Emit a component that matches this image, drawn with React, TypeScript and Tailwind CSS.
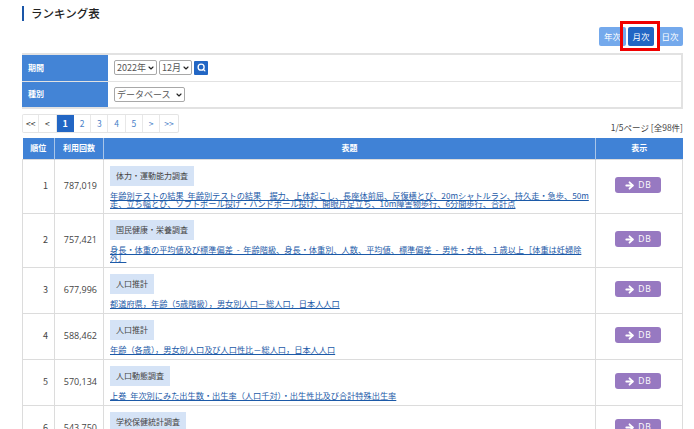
import { ArrowRight, ChevronDown, Search } from "lucide-react";

const rows = [
  { rank: 1, count: "787,019", tag: "体力・運動能力調査", title: "年齢別テストの結果 年齢別テストの結果　握力、上体起こし、長座体前屈、反復横とび、20mシャトルラン、持久走・急歩、50m走、立ち幅とび、ソフトボール投げ・ハンドボール投げ、開眼片足立ち、10m障害物歩行、6分間歩行、合計点" },
  { rank: 2, count: "757,421", tag: "国民健康・栄養調査", title: "身長・体重の平均値及び標準偏差 - 年齢階級、身長・体重別、人数、平均値、標準偏差 - 男性・女性、１歳以上［体重は妊婦除外］" },
  { rank: 3, count: "677,996", tag: "人口推計", title: "都道府県，年齢（5歳階級），男女別人口－総人口，日本人人口" },
  { rank: 4, count: "588,462", tag: "人口推計", title: "年齢（各歳），男女別人口及び人口性比－総人口，日本人人口" },
  { rank: 5, count: "570,134", tag: "人口動態調査", title: "上巻 年次別にみた出生数・出生率（人口千対）・出生性比及び合計特殊出生率" },
  { rank: 6, count: "543,750", tag: "学校保健統計調査", title: "" },
];
const pages = ["<<", "<", "1", "2", "3", "4", "5", ">", ">>"];
const th = "border-r border-[#a9c5e8] last:border-r-0 text-white text-[8px] font-bold text-center align-middle";

function Select({ value, width }: { value: string; width: string }) {
  return (
    <span className={"relative block h-[15px] " + width}>
      <select className="block w-full h-full appearance-none border border-[#a8a8a8] rounded-[2px] pl-[2px] text-[9px] leading-[13px] text-[#555] bg-white">
        <option>{value}</option>
      </select>
      <ChevronDown size={8} strokeWidth={3.5} color="#222" className="absolute right-[2px] top-[4px] pointer-events-none" />
    </span>
  );
}

export default function App() {
  return (
    <div className="h-[429px] overflow-hidden bg-white pl-[22px] pr-[11px] pt-[6px] text-[#333] font-['Noto_Sans_CJK_JP','Noto_Sans',sans-serif]">
      <h1 className="border-l-[2px] border-[#1a56a8] pl-[7px] text-[11.5px] leading-[15px] font-medium text-[#222]">ランキング表</h1>

      <div className="mt-[6px] flex justify-end h-[26px] items-start">
        <div className="relative flex text-[8.5px] text-white">
          <button className="w-[27px] h-[19px] rounded-[2px] bg-[#74a9ec]">年次</button>
          <button className="w-[26px] h-[19px] rounded-[2px] bg-[#2266c4] ml-[2px]">月次</button>
          <button className="w-[26px] h-[19px] rounded-[2px] bg-[#74a9ec] ml-[3px]">日次</button>
          <div className="absolute left-[21px] top-[-6px] w-[40px] h-[30px] border-[3px] border-[#f00000]" />
        </div>
      </div>

      <table className="w-[661px] border-collapse table-fixed border-y-2 border-r-2 border-[#e2e2e2] text-[8px]">
        <tbody>
          <tr className="h-[27px] border-b border-[#e2e2e2]">
            <th className="w-[86px] bg-[#4384d6] text-white font-bold text-left pl-[6px]">期間</th>
            <td className="pl-[6px]">
              <div className="flex items-center">
                <Select value="2022年" width="w-[43px]" />
                <Select value="12月" width="w-[33px] ml-[2px]" />
                <span className="ml-[2px] w-[14px] h-[14px] rounded-[1px] bg-[#2266c4] flex items-center justify-center">
                  <Search size={9} color="white" strokeWidth={3.5} />
                </span>
              </div>
            </td>
          </tr>
          <tr className="h-[27px]">
            <th className="bg-[#4384d6] text-white font-bold text-left pl-[6px]">種別</th>
            <td className="pl-[6px]">
              <Select value="データベース" width="w-[71px]" />
            </td>
          </tr>
        </tbody>
      </table>

      <div className="mt-[5px] flex items-start justify-between h-[21px] w-[661px]">
        <div className="flex h-[19px] border-y border-r border-[#e4e4e4] rounded-[2px]">
          {pages.map((p) => (
            <span
              key={p}
              className={
                p === "1"
                  ? "w-[17.3px] flex items-center justify-center text-[9px] font-bold text-white bg-[#2266c4]"
                  : "w-[17.3px] flex items-center justify-center text-[8.5px] border-r border-[#e8e8e8] first:border-l last:border-r-0 " +
                    (p.includes("<") ? "text-[#333]" : "text-[#4a7fc8]")
              }
            >
              {p}
            </span>
          ))}
        </div>
        <span className="mt-[8px] text-[8.5px] leading-[11px] text-[#444]">1/5ページ [全98件]</span>
      </div>

      <table className="mt-[3px] w-[661px] border-collapse table-fixed text-[8px]">
        <colgroup>
          <col className="w-[32px]" />
          <col className="w-[49px]" />
          <col />
          <col className="w-[87px]" />
        </colgroup>
        <thead>
          <tr className="h-[21px] bg-[#4082d6]">
            <th className={th}>順位</th>
            <th className={th}>利用回数</th>
            <th className={th}>表題</th>
            <th className={th}>表示</th>
          </tr>
        </thead>
        <tbody>
          {rows.map((r) => (
            <tr key={r.rank} className="border border-[#dcdcdc]">
              <td className="border-r border-[#dcdcdc] text-right pr-[6px] align-middle text-[#444] text-[9px]">{r.rank}</td>
              <td className="border-r border-[#dcdcdc] text-right pr-[6px] align-middle text-[#444] text-[9px] font-['Open_Sans',sans-serif]">{r.count}</td>
              <td className="border-r border-[#dcdcdc] pl-[6px] pr-[5px] pt-[6px] pb-[6px] align-top">
                <div className="inline-block align-top bg-[#d5e3f6] px-[6px] h-[20px] leading-[20px] text-[#444]">{r.tag}</div>
                <a className="block mt-[5px] leading-[8px] text-[8.2px] [word-spacing:2px] text-[#1c5aa8] underline min-h-[8px]">{r.title}</a>
              </td>
              <td className="align-middle">
                <span className="ml-[19px] mb-[2px] flex items-center justify-center gap-[3px] w-[46px] h-[16px] rounded-[3px] bg-[#9779c1] text-white text-[8.5px] tracking-[1px] font-['Open_Sans',sans-serif]">
                  <ArrowRight size={11} strokeWidth={4} />DB
                </span>
              </td>
            </tr>
          ))}
        </tbody>
      </table>
    </div>
  );
}
